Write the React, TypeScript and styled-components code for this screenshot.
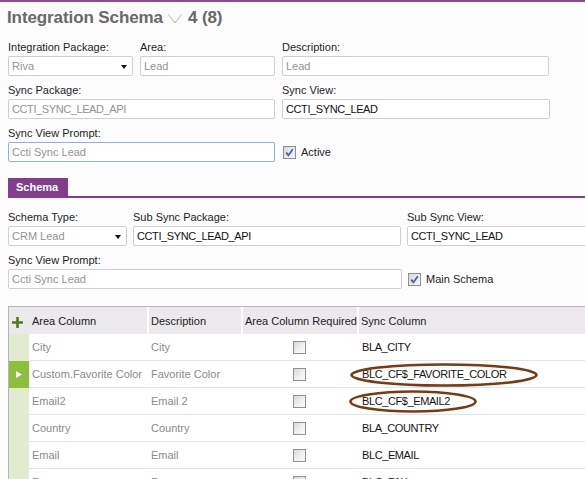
import React from "react";
import styled, { createGlobalStyle } from "styled-components";

const GlobalStyle = createGlobalStyle`
  html, body { margin: 0; padding: 0; }
  body {
    box-sizing: border-box;
    width: 585px;
    height: 479px;
    overflow: hidden;
    background: #fbfcfb;
    border-top: 2px solid #8d4b92;
    font-family: "Liberation Sans", Arial, sans-serif;
    font-size: 11px;
    color: #1e1e1e;
  }
`;

const Page = styled.div`
  width: 720px;
  padding-left: 8px;
  box-sizing: border-box;
`;

const TitleBar = styled.div`
  display: flex;
  align-items: center;
  height: 20px;
  margin-top: 6px;
  margin-left: -1px;
`;

const TitleText = styled.h1`
  margin: 0;
  font-size: 17px;
  line-height: 20px;
  font-weight: bold;
  color: #696969;
  white-space: nowrap;
  letter-spacing: -0.1px;
`;

const ChevronIcon = styled.svg`
  margin: 1px 6px 0 5px;
`;

const Form = styled.div<{ $top: number }>`
  display: flex;
  flex-direction: column;
  gap: 7px;
  margin-top: ${(p) => p.$top}px;
`;

const Row = styled.div<{ $gap: number }>`
  display: flex;
  align-items: flex-end;
  gap: ${(p) => p.$gap}px;
`;

const Field = styled.div<{ $w: number }>`
  display: flex;
  flex-direction: column;
  gap: 2px;
  width: ${(p) => p.$w}px;
  flex: none;
`;

const Label = styled.div`
  height: 14px;
  line-height: 14px;
  white-space: nowrap;
  color: #1e1e1e;
`;

const Box = styled.div<{ $muted?: boolean; $focus?: boolean; $caps?: boolean }>`
  position: relative;
  height: 20px;
  box-sizing: border-box;
  display: flex;
  align-items: center;
  padding: 0 3px;
  background: #fff;
  border: 1px solid ${(p) => (p.$focus ? "#8fb2da" : "#cfcfcf")};
  border-radius: 2px;
  color: ${(p) => (p.$muted ? "#939393" : "#111")};
  letter-spacing: ${(p) => (p.$caps ? "-0.4px" : "0")};
  white-space: nowrap;
  overflow: hidden;
`;

const DropArrow = styled.span`
  position: absolute;
  right: 5px;
  top: 8px;
  width: 0;
  height: 0;
  border-left: 3.5px solid transparent;
  border-right: 3.5px solid transparent;
  border-top: 4px solid #111;
`;

const CheckWrap = styled.div`
  display: flex;
  align-items: center;
  gap: 5px;
  height: 20px;
  margin-left: 1px;
  white-space: nowrap;
  color: #1e1e1e;
`;

const TabBar = styled.div`
  display: flex;
  margin-top: 16px;
  border-bottom: 2px solid #823e8c;
`;

const Tab = styled.div`
  height: 18px;
  line-height: 18px;
  padding: 0 10px 0 8px;
  background: #823e8c;
  color: #fff;
  font-weight: bold;
  font-size: 11px;
`;

const Table = styled.div`
  margin-top: 17px;
  border-top: 1px solid #b5b5b5;
  border-left: 1px solid #b5b5b5;
  background: #fff;
`;

const GridRow = styled.div`
  display: grid;
  grid-template-columns: 20px 118px 94px 116px 1fr;
`;

const HeadCell = styled.div<{ $sep?: boolean }>`
  height: 27px;
  box-sizing: border-box;
  display: flex;
  align-items: center;
  background: #ebe9ec;
  color: #222;
  white-space: nowrap;
  padding-left: ${(p) => (p.$sep ? 2 : 3)}px;
  border-left: ${(p) => (p.$sep ? "2px solid #fff" : "none")};
`;

const AddCell = styled(HeadCell)`
  padding-left: 3px;
  padding-top: 3px;
`;

const Indicator = styled.div<{ $active?: boolean }>`
  height: 27px;
  display: flex;
  align-items: center;
  justify-content: center;
  background: ${(p) => (p.$active ? "#8cbf3c" : "#e2ebcf")};
`;

const Cell = styled.div<{ $pad?: number; $dark?: boolean; $center?: boolean }>`
  position: relative;
  height: 27px;
  box-sizing: border-box;
  display: flex;
  align-items: center;
  justify-content: ${(p) => (p.$center ? "center" : "flex-start")};
  padding-left: ${(p) => p.$pad ?? 4}px;
  border-bottom: 1px solid #e4e4e4;
  color: ${(p) => (p.$dark ? "#141414" : "#8a8a8a")};
  letter-spacing: ${(p) => (p.$dark ? "-0.4px" : "0")};
  white-space: nowrap;
`;

const Mark = styled.svg<{ $left: number }>`
  position: absolute;
  left: ${(p) => p.$left}px;
  top: 2px;
  pointer-events: none;
`;

const Checked = () => (
  <svg width="13" height="13" viewBox="0 0 13 13">
    <defs>
      <linearGradient id="cg" x1="0" y1="0" x2="1" y2="1">
        <stop offset="0" stopColor="#d9d9d9" />
        <stop offset="1" stopColor="#f8f8f8" />
      </linearGradient>
    </defs>
    <rect x="0.5" y="0.5" width="12" height="12" fill="url(#cg)" stroke="#8e8e8e" />
    <path d="M3.2 6.6 L5.4 9.4 L9.8 3.2" fill="none" stroke="#3e5fa3" strokeWidth="1.7" />
  </svg>
);

const Unchecked = () => (
  <svg width="13" height="13" viewBox="0 0 13 13">
    <defs>
      <linearGradient id="ug" x1="0" y1="0" x2="1" y2="1">
        <stop offset="0" stopColor="#d6d6d6" />
        <stop offset="0.6" stopColor="#f2f2f2" />
        <stop offset="1" stopColor="#fbfbfb" />
      </linearGradient>
    </defs>
    <rect x="0.5" y="0.5" width="12" height="12" fill="url(#ug)" stroke="#919191" />
  </svg>
);

const PlusIcon = () => (
  <svg width="11" height="11" viewBox="0 0 11 11">
    <path d="M5.5 0 V11 M0 5.5 H11" stroke="#4e7d16" strokeWidth="2.6" />
  </svg>
);

const RowArrow = () => (
  <svg width="6" height="7" viewBox="0 0 6 7">
    <path d="M0 0 L6 3.5 L0 7 Z" fill="#fff" />
  </svg>
);

type DataRow = {
  area: string;
  desc: string;
  sync: string;
  active?: boolean;
  mark?: { left: number; width: number; height: number };
};

const rows: DataRow[] = [
  { area: "City", desc: "City", sync: "BLA_CITY" },
  {
    area: "Custom.Favorite Color",
    desc: "Favorite Color",
    sync: "BLC_CF$_FAVORITE_COLOR",
    active: true,
    mark: { left: -7, width: 188, height: 24 },
  },
  {
    area: "Email2",
    desc: "Email 2",
    sync: "BLC_CF$_EMAIL2",
    mark: { left: -8, width: 128, height: 23 },
  },
  { area: "Country", desc: "Country", sync: "BLA_COUNTRY" },
  { area: "Email", desc: "Email", sync: "BLC_EMAIL" },
  { area: "Fax", desc: "Fax", sync: "BLC_FAX" },
];

export default function App() {
  return (
    <>
      <GlobalStyle />
      <Page>
        <TitleBar>
          <TitleText>Integration Schema</TitleText>
          <ChevronIcon width="14" height="10" viewBox="0 0 14 10">
            <path d="M0.5 0.5 L7 9 L13.5 0.5" fill="none" stroke="#b3b3b3" strokeWidth="1" />
          </ChevronIcon>
          <TitleText>4 (8)</TitleText>
        </TitleBar>

        <Form $top={12}>
          <Row $gap={7}>
            <Field $w={125}>
              <Label>Integration Package:</Label>
              <Box $muted>
                Riva
                <DropArrow />
              </Box>
            </Field>
            <Field $w={135}>
              <Label>Area:</Label>
              <Box $muted>Lead</Box>
            </Field>
            <Field $w={267}>
              <Label>Description:</Label>
              <Box $muted>Lead</Box>
            </Field>
          </Row>
          <Row $gap={7}>
            <Field $w={267}>
              <Label>Sync Package:</Label>
              <Box $muted $caps>CCTI_SYNC_LEAD_API</Box>
            </Field>
            <Field $w={268}>
              <Label>Sync View:</Label>
              <Box $caps>CCTI_SYNC_LEAD</Box>
            </Field>
          </Row>
          <Row $gap={7}>
            <Field $w={267}>
              <Label>Sync View Prompt:</Label>
              <Box $muted $focus>
                Ccti Sync Lead
              </Box>
            </Field>
            <CheckWrap>
              <Checked />
              Active
            </CheckWrap>
          </Row>
        </Form>

        <TabBar>
          <Tab>Schema</Tab>
        </TabBar>

        <Form $top={12}>
          <Row $gap={6}>
            <Field $w={119}>
              <Label>Schema Type:</Label>
              <Box $muted>
                CRM Lead
                <DropArrow />
              </Box>
            </Field>
            <Field $w={268}>
              <Label>Sub Sync Package:</Label>
              <Box $caps>CCTI_SYNC_LEAD_API</Box>
            </Field>
            <Field $w={268}>
              <Label>Sub Sync View:</Label>
              <Box $caps>CCTI_SYNC_LEAD</Box>
            </Field>
          </Row>
          <Row $gap={5}>
            <Field $w={394}>
              <Label>Sync View Prompt:</Label>
              <Box $muted>Ccti Sync Lead</Box>
            </Field>
            <CheckWrap>
              <Checked />
              Main Schema
            </CheckWrap>
          </Row>
        </Form>

        <Table>
          <GridRow>
            <AddCell>
              <PlusIcon />
            </AddCell>
            <HeadCell>Area Column</HeadCell>
            <HeadCell $sep>Description</HeadCell>
            <HeadCell $sep>Area Column Required</HeadCell>
            <HeadCell $sep>Sync Column</HeadCell>
          </GridRow>
          {rows.map((r) => (
            <GridRow key={r.area}>
              <Indicator $active={r.active}>{r.active && <RowArrow />}</Indicator>
              <Cell $pad={3}>{r.area}</Cell>
              <Cell>{r.desc}</Cell>
              <Cell $center $pad={0}>
                <Unchecked />
              </Cell>
              <Cell $dark $pad={5}>
                {r.sync}
                {r.mark && (
                  <Mark
                    $left={r.mark.left}
                    width={r.mark.width}
                    height={r.mark.height}
                    viewBox={`0 0 ${r.mark.width} ${r.mark.height}`}
                  >
                    <ellipse
                      cx={r.mark.width / 2}
                      cy={r.mark.height / 2}
                      rx={r.mark.width / 2 - 1.5}
                      ry={r.mark.height / 2 - 1.5}
                      fill="none"
                      stroke="#7b3a12"
                      strokeWidth="2.6"
                    />
                  </Mark>
                )}
              </Cell>
            </GridRow>
          ))}
        </Table>
      </Page>
    </>
  );
}
